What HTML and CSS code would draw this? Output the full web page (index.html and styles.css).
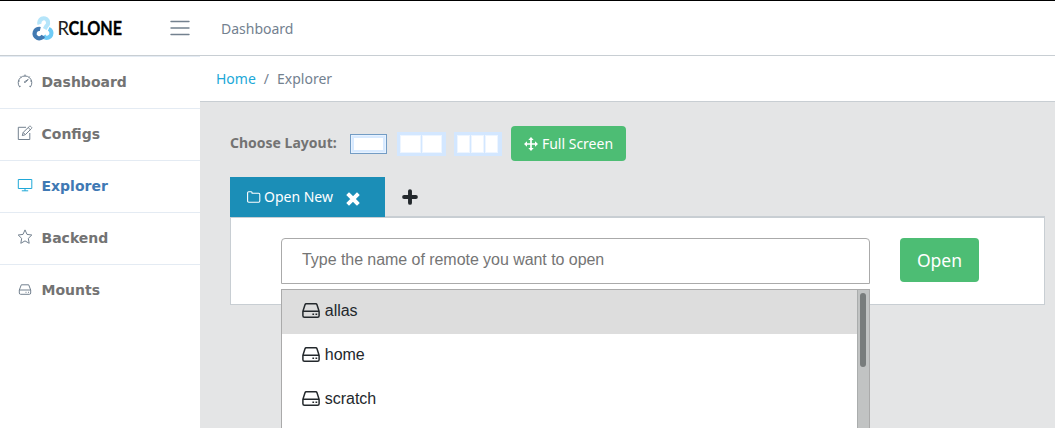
FILE: index.html
```html
<!DOCTYPE html>
<html lang="en">
<head>
<meta charset="utf-8">
<title>Rclone Explorer</title>
<link rel="stylesheet" href="styles.css">
</head>
<body>
<svg class="defs" width="0" height="0">
  <symbol id="drive" viewBox="0 0 18 15">
    <path d="M4.200 .8h9.600c.7 0 1 .3 1.200 .9l2.100 6.600v4.400c0 1-.6 1.500-1.500 1.500H2.400c-.9 0-1.500-.5-1.500-1.500V8.300L3 1.700c.2-.6.5-.9 1.200-.9zM1 8.300h16" fill="none" stroke="currentColor" stroke-width="1.500"/>
    <path d="M10.400 10.500h1.700v1.600h-1.700zM13.500 10.500h1.700v1.600h-1.700z" fill="currentColor"/>
  </symbol>
</svg>
<header class="header">
  <a class="brand">
    <svg class="logo" width="96" height="30" viewBox="0 0 96 30">
      <g fill="none" stroke-width="4.200">
        <path d="M7.600 11.200A4.400 4.400 0 1 1 14.400 13.200L12.700 16" stroke="#b5e5fa"/>
        <path d="M16.700 15.800A4.700 4.700 0 1 1 12.800 24.400L11.700 22.600" stroke="#6fcbf6"/>
        <path d="M8.300 16A4.700 4.700 0 1 0 11.300 22.900" stroke="#427ab2"/>
      </g>
      <text class="logo-light" x="25.500" y="22" textLength="11.500" lengthAdjust="spacingAndGlyphs">R</text>
      <text class="logo-bold" x="36.500" y="22" textLength="53.500" lengthAdjust="spacingAndGlyphs">CLONE</text>
    </svg>
  </a>
  <svg class="burger" width="20" height="16" viewBox="0 0 20 16"><path d="M1 1.500h18M1 8h18M1 14.500h18" stroke="#73818f" stroke-width="1.400" stroke-linecap="round"/></svg>
  <span class="header-link">Dashboard</span>
</header>
<div class="body">
  <nav class="sidebar">
    <a class="nav-item"><svg width="16" height="16" viewBox="0 0 16 16"><path d="M3.700 13.200l-1 .8A6.800 6.800 0 1 1 13.300 14l-1-.8M8 1.500v2M1.300 8h1.500M13.200 8h1.500M3.300 3.500l1 1M12.700 3.500l-.8.800M7.200 9l4-2.600-3.200 3.400z"/></svg>Dashboard</a>
    <a class="nav-item"><svg width="16" height="16" viewBox="0 0 16 16"><path d="M9 2.300H1.300v12.200h11.500V8M5.300 10.600l.9-3.200L12.300 1.500c.5-.5 1-.5 1.500 0l.6.600c.5.5.5 1 0 1.500L8.300 9.700zM11.200 2.600l2.100 2.100M6.200 7.500l2 2"/></svg>Configs</a>
    <a class="nav-item active"><svg width="16" height="16" viewBox="0 0 16 16"><path d="M1.300 2.500h13.500v9H1.300zM8 11.500v2.300M4.800 13.800h6.400"/></svg>Explorer</a>
    <a class="nav-item"><svg width="16" height="16" viewBox="0 0 16 16"><path d="M8 .9l2 4.500 4.800.6-3.500 3.400.9 4.900L8 11.900l-4.200 2.400.9-4.900L1.200 6 6 5.400z"/></svg>Backend</a>
    <a class="nav-item"><svg width="16" height="11" viewBox="0 0 16 11"><path d="M4.300.8h7.400l2 5.200v3q0 1.300-1.300 1.300H3.600Q2.300 10.300 2.300 9V6zM2.300 6h11.400M8.500 8.300h1M11 8.300h1"/></svg>Mounts</a>
  </nav>
  <main class="main">
    <div class="breadcrumb"><a>Home</a><span>/</span><span>Explorer</span></div>
    <section class="content">
      <div class="toolbar">
        <strong class="toolbar-label">Choose Layout:</strong>
        <div class="layout layout-one"><i></i></div>
        <div class="layout layout-two"><i></i><i></i></div>
        <div class="layout layout-three"><i></i><i></i><i></i></div>
        <button class="button full-screen"><svg width="14" height="14" viewBox="0 0 14 14"><path d="M7 1v12M1 7h12" stroke="#fff" stroke-width="1.700"/><path d="M7 0l2.700 3H4.300zM7 14l2.700-3H4.300zM0 7l3-2.700v5.400zM14 7l-3-2.700v5.400z" fill="#fff"/></svg>Full Screen</button>
      </div>
      <div class="tabs">
        <div class="tab"><svg class="folder" width="14" height="12" viewBox="0 0 14 12"><path d="M.6 10V1.800Q.6.700 1.700.700h2.400q1 0 1 1v.5h6.500q1.200 0 1.200 1.200V10q0 1.200-1.200 1.200H1.800Q.6 11.200.6 10z" fill="none" stroke="#fff" stroke-width="1.100"/></svg>Open New<svg class="close" width="14" height="14" viewBox="0 0 14 14"><path d="M3 3l8 8M11 3l-8 8" stroke="#fff" stroke-width="3.900" stroke-linecap="square"/></svg></div>
        <svg class="plus" width="16" height="16" viewBox="0 0 16 16"><path d="M8 2.100v11.800M2.100 8h11.800" stroke="#23282c" stroke-width="3.900" stroke-linecap="round"/></svg>
      </div>
      <div class="panel">
        <div class="search">
          <input class="remote-input" type="text" placeholder="Type the name of remote you want to open">
          <div class="dropdown">
            <ul class="options">
              <li class="option highlighted"><svg width="18" height="15"><use href="#drive"/></svg>allas</li>
              <li class="option"><svg width="18" height="15"><use href="#drive"/></svg>home</li>
              <li class="option"><svg width="18" height="15"><use href="#drive"/></svg>scratch</li>
            </ul>
            <div class="scrollbar"><div class="thumb"></div></div>
          </div>
        </div>
        <button class="button open">Open</button>
      </div>
    </section>
  </main>
</div>
</body>
</html>
```

FILE: styles.css
```css
* { box-sizing: border-box; }
body {
  margin: 0;
  height: 428px;
  overflow: hidden;
  display: flex;
  flex-direction: column;
  background: #e4e5e6;
  color: #23282c;
  font: 14px/21px "Noto Sans", sans-serif;
}
.defs { display: none; }
.header {
  height: 56px;
  flex: none;
  display: flex;
  align-items: center;
  background: #fff;
  border-top: 1px solid #000;
  border-bottom: 1px solid #c8ced3;
  color: #73818f;
}
.brand { padding-left: 32px; display: flex; }
.logo { overflow: visible; }
.logo-light, .logo-bold { font-family: Lato, sans-serif; font-size: 18.5px; fill: #000; }
.logo-light { font-weight: 400; fill: #222; }
.logo-bold { font-weight: 700; stroke: #000; stroke-width: .3px; }
.burger { margin-left: 42px; }
.header-link { margin-left: 31px; }
.body { flex: 1; min-height: 0; display: flex; }
.sidebar { width: 200px; flex: none; background: #fff; }
.nav-item {
  height: 52px;
  display: flex;
  align-items: center;
  gap: 8.5px;
  padding: 0 0 2px 17px;
  border-top: 1px solid #e4ebf3;
  color: #737373;
  font: bold 14px "DejaVu Sans", sans-serif;
}
.nav-item svg { margin-bottom: 1px; fill: none; stroke: #73818f; stroke-width: 1; }
.nav-item.active { color: #3f79b4; }
.nav-item.active svg { stroke: #20a8d8; }
.main { flex: 1; min-width: 0; }
.breadcrumb {
  height: 46px;
  padding: 0 16px;
  display: flex;
  align-items: center;
  gap: 8px;
  background: #fff;
  border-bottom: 1px solid #c8ced3;
  color: #73818f;
}
.breadcrumb a { color: #20a8d8; }
.content { padding: 24px 10px 0 30px; }
.toolbar { height: 35px; display: flex; align-items: center; }
.toolbar-label { width: 120px; padding-bottom: 2px; color: #737373; }
.layout { display: flex; gap: 1px; background: #d3e7ff; }
.layout i { flex: 1; background: #fff; border: 1px solid #edf5ff; }
.layout-one { width: 37px; height: 20px; padding: 1px; border: 1px solid #739cc4; background: #e7f2ff; }
.layout-one i { border: 2px solid #d8eaff; }
.layout-two { width: 49px; height: 24px; margin-left: 10px; padding: 3px; }
.layout-three { width: 48px; height: 24px; margin: 0 9px 0 8px; padding: 3px; }
.layout-two, .layout-three { border-right: 1px solid #d3e7ff; }
.button {
  display: flex;
  align-items: center;
  justify-content: center;
  border: 0;
  border-radius: 4px;
  background: #4dbd74;
  color: #fff;
  font: 14px/21px "Noto Sans", sans-serif;
}
.full-screen { width: 115px; height: 35px; padding: 0; gap: 4px; }
.tabs { height: 40px; margin: 16px 0 -1px; position: relative; display: flex; align-items: center; }
.tab {
  width: 155px;
  height: 40px;
  display: flex;
  align-items: center;
  padding: 0 0 1px 17px;
  background: #1b8eb7;
  color: #fff;
}
.folder { margin-right: 3px; }
.close { margin: 4px 0 0 12.500px; }
.plus { margin-left: 17px; }
.panel {
  height: 89px;
  display: flex;
  align-items: flex-start;
  padding: 20px 0 0 50px;
  background: #fff;
  border: 1px solid #c8ced3;
  border-top-width: 2px;
}
.search { position: relative; width: 589px; }
.remote-input {
  display: block;
  width: 589px;
  height: 46px;
  padding: 0 20px 3px;
  border: 1px solid #aaa;
  border-radius: 4px 4px 0 0;
  outline: 0;
  font: 16px "Liberation Sans", sans-serif;
  letter-spacing: -.05px;
}
.remote-input::placeholder { color: #757575; opacity: 1; }
.dropdown {
  position: absolute;
  top: 51px;
  left: 0;
  width: 589px;
  height: 139px;
  display: flex;
  border: 1px solid #aaa;
  border-bottom: 0;
  background: #fff;
  font: 16px "Liberation Sans", sans-serif;
  letter-spacing: -.03px;
}
.options { flex: 1; margin: 0; padding: 0; list-style: none; }
.option { height: 44px; display: flex; align-items: center; gap: 4.800px; padding: 0 20px 2px; }
.option svg { margin-bottom: 1px; }
.option.highlighted { background: #ddd; }
.scrollbar { width: 12px; padding: 3px 3px 0 2px; background: #c1c3c3; border-left: 1px solid #aaadad; }
.thumb { width: 6px; height: 74px; border-radius: 3px; background: #787c7c; }
.open { width: 79px; height: 44px; margin-left: 30px; font-size: 17.5px; }
```
